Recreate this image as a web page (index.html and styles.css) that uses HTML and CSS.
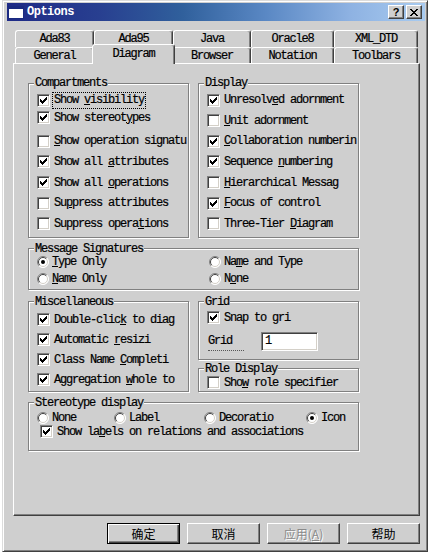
FILE: index.html
```html
<!DOCTYPE html>
<html>
<head>
<meta charset="utf-8">
<link rel="stylesheet" href="styles.css">
</head>
<body>
<div class="window">
  <div class="titlebar">
    <svg class="appicon" width="16" height="13" viewBox="0 0 16 13"><rect x="0.5" y="0.5" width="15" height="12" fill="#fff" stroke="#1a2a80"/><rect x="0" y="0" width="16" height="3" fill="#1a2a80"/></svg>
    <span class="title">Options</span>
    <div class="capbtns">
      <span class="cbtn q">?</span>
      <span class="cbtn"><svg width="8" height="7" viewBox="0 0 8 7"><path d="M0 0h2v1h-2zM6 0h2v1h-2zM1 1h2v1h-2zM5 1h2v1h-2zM2 2h4v1h-4zM3 3h2v1h-2zM2 4h4v1h-4zM1 5h2v1h-2zM5 5h2v1h-2zM0 6h2v1h-2zM6 6h2v1h-2z" fill="#000"/></svg></span>
    </div>
  </div>
  <div class="body">
    <div class="tabs">
      <div class="tabrow back">
        <div class="tab">Ada83</div>
        <div class="tab">Ada95</div>
        <div class="tab">Java</div>
        <div class="tab">Oracle8</div>
        <div class="tab">XML_DTD</div>
      </div>
      <div class="tabrow front">
        <div class="tab">General</div>
        <div class="tab sel">Diagram</div>
        <div class="tab">Browser</div>
        <div class="tab">Notation</div>
        <div class="tab">Toolbars</div>
      </div>
    </div>
    <div class="panel">
      <div class="pair">
        <fieldset class="grp half">
          <legend>Compartments</legend>
          <div class="rows seven">
            <div class="row"><span class="cb"><svg width="7" height="7" viewBox="0 0 7 7"><path d="M6 0h1v3h-1zM5 1h1v3h-1zM4 2h1v3h-1zM3 3h1v3h-1zM2 4h1v3h-1zM1 3h1v3h-1zM0 2h1v3h-1z"/></svg></span><span class="focus">Show <u>v</u>isibility</span></div>
            <div class="row up"><span class="cb"><svg width="7" height="7" viewBox="0 0 7 7"><path d="M6 0h1v3h-1zM5 1h1v3h-1zM4 2h1v3h-1zM3 3h1v3h-1zM2 4h1v3h-1zM1 3h1v3h-1zM0 2h1v3h-1z"/></svg></span><span>Show stereot<u>y</u>pes</span></div>
            <div class="row"><span class="cb"></span><span><u>S</u>how operation signatu</span></div>
            <div class="row"><span class="cb"><svg width="7" height="7" viewBox="0 0 7 7"><path d="M6 0h1v3h-1zM5 1h1v3h-1zM4 2h1v3h-1zM3 3h1v3h-1zM2 4h1v3h-1zM1 3h1v3h-1zM0 2h1v3h-1z"/></svg></span><span>Show all <u>a</u>ttributes</span></div>
            <div class="row"><span class="cb"><svg width="7" height="7" viewBox="0 0 7 7"><path d="M6 0h1v3h-1zM5 1h1v3h-1zM4 2h1v3h-1zM3 3h1v3h-1zM2 4h1v3h-1zM1 3h1v3h-1zM0 2h1v3h-1z"/></svg></span><span>Show all <u>o</u>perations</span></div>
            <div class="row"><span class="cb"></span><span>Su<u>p</u>press attributes</span></div>
            <div class="row"><span class="cb"></span><span>Suppress opera<u>t</u>ions</span></div>
          </div>
        </fieldset>
        <fieldset class="grp half">
          <legend>Display</legend>
          <div class="rows seven">
            <div class="row"><span class="cb"><svg width="7" height="7" viewBox="0 0 7 7"><path d="M6 0h1v3h-1zM5 1h1v3h-1zM4 2h1v3h-1zM3 3h1v3h-1zM2 4h1v3h-1zM1 3h1v3h-1zM0 2h1v3h-1z"/></svg></span><span>Unresolv<u>e</u>d adornment</span></div>
            <div class="row"><span class="cb"></span><span><u>U</u>nit adornment</span></div>
            <div class="row"><span class="cb"><svg width="7" height="7" viewBox="0 0 7 7"><path d="M6 0h1v3h-1zM5 1h1v3h-1zM4 2h1v3h-1zM3 3h1v3h-1zM2 4h1v3h-1zM1 3h1v3h-1zM0 2h1v3h-1z"/></svg></span><span><u>C</u>ollaboration numberin</span></div>
            <div class="row"><span class="cb"><svg width="7" height="7" viewBox="0 0 7 7"><path d="M6 0h1v3h-1zM5 1h1v3h-1zM4 2h1v3h-1zM3 3h1v3h-1zM2 4h1v3h-1zM1 3h1v3h-1zM0 2h1v3h-1z"/></svg></span><span>Sequence <u>n</u>umbering</span></div>
            <div class="row"><span class="cb"></span><span><u>H</u>ierarchical Messag</span></div>
            <div class="row"><span class="cb"><svg width="7" height="7" viewBox="0 0 7 7"><path d="M6 0h1v3h-1zM5 1h1v3h-1zM4 2h1v3h-1zM3 3h1v3h-1zM2 4h1v3h-1zM1 3h1v3h-1zM0 2h1v3h-1z"/></svg></span><span><u>F</u>ocus of control</span></div>
            <div class="row"><span class="cb"></span><span>Three-Tier <u>D</u>iagram</span></div>
          </div>
        </fieldset>
      </div>

      <fieldset class="grp wide msg">
        <legend>Message Signatures</legend>
        <div class="radiogrid">
          <div class="rrow"><svg class="rb" width="12" height="12" viewBox="0 0 12 12"><circle cx="6" cy="6" r="5.5" fill="#fff"/><path d="M2.1 9.9A5.5 5.5 0 0 1 9.9 2.1" stroke="#808080" fill="none"/><path d="M9.9 2.1A5.5 5.5 0 0 1 2.1 9.9" stroke="#fff" fill="none"/><path d="M2.8 9.2A4.5 4.5 0 0 1 9.2 2.8" stroke="#404040" fill="none"/><path d="M9.2 2.8A4.5 4.5 0 0 1 2.8 9.2" stroke="#d4d0c8" fill="none"/><circle cx="6" cy="6" r="2" fill="#000"/></svg><span><u>T</u>ype Only</span></div>
          <div class="rrow"><svg class="rb" width="12" height="12" viewBox="0 0 12 12"><circle cx="6" cy="6" r="5.5" fill="#fff"/><path d="M2.1 9.9A5.5 5.5 0 0 1 9.9 2.1" stroke="#808080" fill="none"/><path d="M9.9 2.1A5.5 5.5 0 0 1 2.1 9.9" stroke="#fff" fill="none"/><path d="M2.8 9.2A4.5 4.5 0 0 1 9.2 2.8" stroke="#404040" fill="none"/><path d="M9.2 2.8A4.5 4.5 0 0 1 2.8 9.2" stroke="#d4d0c8" fill="none"/></svg><span>Na<u>m</u>e and Type</span></div>
          <div class="rrow"><svg class="rb" width="12" height="12" viewBox="0 0 12 12"><circle cx="6" cy="6" r="5.5" fill="#fff"/><path d="M2.1 9.9A5.5 5.5 0 0 1 9.9 2.1" stroke="#808080" fill="none"/><path d="M9.9 2.1A5.5 5.5 0 0 1 2.1 9.9" stroke="#fff" fill="none"/><path d="M2.8 9.2A4.5 4.5 0 0 1 9.2 2.8" stroke="#404040" fill="none"/><path d="M9.2 2.8A4.5 4.5 0 0 1 2.8 9.2" stroke="#d4d0c8" fill="none"/></svg><span><u>N</u>ame Only</span></div>
          <div class="rrow"><svg class="rb" width="12" height="12" viewBox="0 0 12 12"><circle cx="6" cy="6" r="5.5" fill="#fff"/><path d="M2.1 9.9A5.5 5.5 0 0 1 9.9 2.1" stroke="#808080" fill="none"/><path d="M9.9 2.1A5.5 5.5 0 0 1 2.1 9.9" stroke="#fff" fill="none"/><path d="M2.8 9.2A4.5 4.5 0 0 1 9.2 2.8" stroke="#404040" fill="none"/><path d="M9.2 2.8A4.5 4.5 0 0 1 2.8 9.2" stroke="#d4d0c8" fill="none"/></svg><span>N<u>o</u>ne</span></div>
        </div>
      </fieldset>

      <div class="pair lower">
        <fieldset class="grp half misc">
          <legend>Miscellaneous</legend>
          <div class="rows four">
            <div class="row"><span class="cb"><svg width="7" height="7" viewBox="0 0 7 7"><path d="M6 0h1v3h-1zM5 1h1v3h-1zM4 2h1v3h-1zM3 3h1v3h-1zM2 4h1v3h-1zM1 3h1v3h-1zM0 2h1v3h-1z"/></svg></span><span>Double-clic<u>k</u> to diag</span></div>
            <div class="row"><span class="cb"><svg width="7" height="7" viewBox="0 0 7 7"><path d="M6 0h1v3h-1zM5 1h1v3h-1zM4 2h1v3h-1zM3 3h1v3h-1zM2 4h1v3h-1zM1 3h1v3h-1zM0 2h1v3h-1z"/></svg></span><span>Automatic <u>r</u>esizi</span></div>
            <div class="row"><span class="cb"><svg width="7" height="7" viewBox="0 0 7 7"><path d="M6 0h1v3h-1zM5 1h1v3h-1zM4 2h1v3h-1zM3 3h1v3h-1zM2 4h1v3h-1zM1 3h1v3h-1zM0 2h1v3h-1z"/></svg></span><span>Class Name <u>C</u>ompleti</span></div>
            <div class="row"><span class="cb"><svg width="7" height="7" viewBox="0 0 7 7"><path d="M6 0h1v3h-1zM5 1h1v3h-1zM4 2h1v3h-1zM3 3h1v3h-1zM2 4h1v3h-1zM1 3h1v3h-1zM0 2h1v3h-1z"/></svg></span><span>Aggregation <u>w</u>hole to</span></div>
          </div>
        </fieldset>
        <div class="col">
          <fieldset class="grp half grid">
            <legend>Grid</legend>
            <div class="row"><span class="cb"><svg width="7" height="7" viewBox="0 0 7 7"><path d="M6 0h1v3h-1zM5 1h1v3h-1zM4 2h1v3h-1zM3 3h1v3h-1zM2 4h1v3h-1zM1 3h1v3h-1zM0 2h1v3h-1z"/></svg></span><span>Snap to <u>g</u>ri</span></div>
            <div class="field">
              <span class="flabel">Grid</span>
              <span class="input">1</span>
            </div>
          </fieldset>
          <fieldset class="grp half role">
            <legend>Role Display</legend>
            <div class="row short"><span class="cb"></span><span>Sho<u>w</u> role specifier</span></div>
          </fieldset>
        </div>
      </div>

      <fieldset class="grp wide stereo">
        <legend>Stereotype display</legend>
        <div class="srow">
          <div class="rrow s1"><svg class="rb" width="12" height="12" viewBox="0 0 12 12"><circle cx="6" cy="6" r="5.5" fill="#fff"/><path d="M2.1 9.9A5.5 5.5 0 0 1 9.9 2.1" stroke="#808080" fill="none"/><path d="M9.9 2.1A5.5 5.5 0 0 1 2.1 9.9" stroke="#fff" fill="none"/><path d="M2.8 9.2A4.5 4.5 0 0 1 9.2 2.8" stroke="#404040" fill="none"/><path d="M9.2 2.8A4.5 4.5 0 0 1 2.8 9.2" stroke="#d4d0c8" fill="none"/></svg><span>None</span></div>
          <div class="rrow s2"><svg class="rb" width="12" height="12" viewBox="0 0 12 12"><circle cx="6" cy="6" r="5.5" fill="#fff"/><path d="M2.1 9.9A5.5 5.5 0 0 1 9.9 2.1" stroke="#808080" fill="none"/><path d="M9.9 2.1A5.5 5.5 0 0 1 2.1 9.9" stroke="#fff" fill="none"/><path d="M2.8 9.2A4.5 4.5 0 0 1 9.2 2.8" stroke="#404040" fill="none"/><path d="M9.2 2.8A4.5 4.5 0 0 1 2.8 9.2" stroke="#d4d0c8" fill="none"/></svg><span>Label</span></div>
          <div class="rrow s3"><svg class="rb" width="12" height="12" viewBox="0 0 12 12"><circle cx="6" cy="6" r="5.5" fill="#fff"/><path d="M2.1 9.9A5.5 5.5 0 0 1 9.9 2.1" stroke="#808080" fill="none"/><path d="M9.9 2.1A5.5 5.5 0 0 1 2.1 9.9" stroke="#fff" fill="none"/><path d="M2.8 9.2A4.5 4.5 0 0 1 9.2 2.8" stroke="#404040" fill="none"/><path d="M9.2 2.8A4.5 4.5 0 0 1 2.8 9.2" stroke="#d4d0c8" fill="none"/></svg><span>Decoratio</span></div>
          <div class="rrow"><svg class="rb" width="12" height="12" viewBox="0 0 12 12"><circle cx="6" cy="6" r="5.5" fill="#fff"/><path d="M2.1 9.9A5.5 5.5 0 0 1 9.9 2.1" stroke="#808080" fill="none"/><path d="M9.9 2.1A5.5 5.5 0 0 1 2.1 9.9" stroke="#fff" fill="none"/><path d="M2.8 9.2A4.5 4.5 0 0 1 9.2 2.8" stroke="#404040" fill="none"/><path d="M9.2 2.8A4.5 4.5 0 0 1 2.8 9.2" stroke="#d4d0c8" fill="none"/><circle cx="6" cy="6" r="2" fill="#000"/></svg><span>Icon</span></div>
        </div>
        <div class="row short indent"><span class="cb"><svg width="7" height="7" viewBox="0 0 7 7"><path d="M6 0h1v3h-1zM5 1h1v3h-1zM4 2h1v3h-1zM3 3h1v3h-1zM2 4h1v3h-1zM1 3h1v3h-1zM0 2h1v3h-1z"/></svg></span><span>Show la<u>b</u>els on relations and associations</span></div>
      </fieldset>
    </div>
    <div class="btns">
      <span class="btn def">确定</span>
      <span class="btn">取消</span>
      <span class="btn dis">应用(<u>A</u>)</span>
      <span class="btn">帮助</span>
    </div>
  </div>
</div>
</body>
</html>
```

FILE: styles.css
```css
:root {
  --face: #cfcfcf;
}

html, body {
  margin: 0;
  background: #ffffff;
}

body {
  font-family: "Liberation Mono", "DejaVu Sans Mono", monospace;
  font-size: 12px;
  letter-spacing: -1.2px;
  -webkit-text-stroke: 0.2px #000;
  color: #000;
}

.window {
  margin-left: 2px;
  width: 426px;
  box-sizing: border-box;
  background: var(--face);
  border: 1px solid;
  border-color: #dcdcdc #404040 #404040 #dcdcdc;
  box-shadow: inset 1px 1px #fff, inset -1px -1px #808080;
  padding: 2px 2px 7px 4px;
}

/* title bar */
.titlebar {
  height: 18px;
  display: flex;
  align-items: center;
  background: linear-gradient(90deg, #1e2a86 0%, #283f90 22%, #30609c 42%, #5a88c4 62%, #8eb2e2 82%, #a8cbf0 100%);
}

.appicon {
  margin-left: 1px;
  flex: none;
}

.title {
  margin-left: 3px;
  color: #fff;
  -webkit-text-stroke: 0;
  font-weight: bold;
  letter-spacing: -0.5px;
  font-size: 12px;
}

.capbtns {
  margin-left: auto;
  margin-right: 3px;
  display: flex;
  gap: 2px;
}

.cbtn {
  width: 16px;
  height: 14px;
  box-sizing: border-box;
  background: var(--face);
  border: 1px solid;
  border-color: #fff #404040 #404040 #fff;
  box-shadow: inset -1px -1px #808080;
  display: flex;
  align-items: center;
  justify-content: center;
}

.cbtn.q {
  font-family: "Liberation Sans", Arial, sans-serif;
  font-weight: bold;
  font-size: 11px;
  letter-spacing: 0;
  line-height: 12px;
  -webkit-text-stroke: 0;
}

/* body */
.body {
  padding: 9px 5px 0 6px;
}

.tabs {
  display: flex;
  flex-direction: column;
}

.tabrow {
  display: grid;
  grid-template-columns: 79px 79px 78px 83px 84px;
  margin-left: 2px;
}

.tabrow.back {
  grid-template-rows: 17px;
}

.tabrow.front {
  grid-template-rows: 16px;
}

.tab {
  box-sizing: border-box;
  background: var(--face);
  border-top: 1px solid #fff;
  border-left: 1px solid #fff;
  border-right: 1px solid #404040;
  box-shadow: inset -1px 0 #808080;
  border-radius: 3px 3px 0 0;
  display: flex;
  align-items: center;
  justify-content: center;
  white-space: nowrap;
}

.tab.sel {
  align-self: start;
  height: 20px;
  margin: -3px -2px -1px -2px;
  position: relative;
  z-index: 1;
  padding-bottom: 1px;
}

.panel {
  height: 453px;
  box-sizing: border-box;
  border: 1px solid;
  border-color: #fff #404040 #404040 #fff;
  box-shadow: inset -1px -1px #808080;
  padding: 13px 0 0 14px;
  display: flex;
  flex-direction: column;
  align-items: flex-start;
}

.pair {
  display: flex;
  gap: 9px;
  align-items: stretch;
}

/* group boxes */
.grp {
  margin: 0;
  padding: 2px 8px 4px 8px;
  border: 1px solid #808080;
  box-shadow: inset 1px 1px #fff, 1px 1px #fff;
  min-width: 0;
  box-sizing: border-box;
}

.grp legend {
  padding: 0 1px;
  margin-left: -3px;
  line-height: 12px;
  background: var(--face);
  white-space: nowrap;
}

.half {
  width: 161px;
}

.wide {
  width: 331px;
}

.rows {
  display: flex;
  flex-direction: column;
}

.rows.seven {
  gap: 2.67px;
}

.rows.four {
  gap: 2px;
}

.row {
  display: flex;
  align-items: center;
  gap: 4px;
  height: 18px;
  white-space: nowrap;
}

.row.short {
  height: 14px;
}

.row.up {
  margin-top: -3px;
  margin-bottom: 3px;
}

.cb {
  flex: none;
  width: 13px;
  height: 13px;
  box-sizing: border-box;
  background: #fff;
  border: 1px solid;
  border-color: #808080 #fff #fff #808080;
  box-shadow: inset 1px 1px #404040, inset -1px -1px #d4d0c8;
  display: flex;
  align-items: center;
  justify-content: center;
}

.cb svg {
  display: block;
  fill: #000;
}

.focus {
  outline: 1px dotted #000;
  padding: 0 1px;
  margin-left: -1px;
  line-height: 15px;
}

/* radio */
.radiogrid {
  display: grid;
  grid-template-columns: 172px 1fr;
  row-gap: 3px;
}

.msg {
  margin-top: 5px;
  padding-top: 0;
  padding-bottom: 3px;
}

.rrow {
  display: flex;
  align-items: center;
  gap: 3px;
  height: 14px;
  white-space: nowrap;
}

.rb {
  flex: none;
  display: block;
}

/* lower section */
.lower {
  margin-top: 6px;
  align-items: flex-start;
}

.misc {
  padding-top: 3px;
  padding-bottom: 2px;
}

.col {
  display: flex;
  flex-direction: column;
  gap: 3px;
}

.grid {
  padding-top: 1px;
  padding-bottom: 8px;
}

.field {
  display: flex;
  align-items: flex-start;
  margin-top: 5px;
  margin-left: 1px;
}

.flabel {
  width: 36px;
  height: 16px;
  margin-top: 3px;
  margin-right: 17px;
  line-height: 13px;
  border-bottom: 1px dotted #555;
  box-sizing: border-box;
}

.input {
  width: 57px;
  height: 19px;
  box-sizing: border-box;
  background: #fff;
  border: 1px solid;
  border-color: #808080 #fff #fff #808080;
  box-shadow: inset 1px 1px #404040, inset -1px -1px #d4d0c8;
  padding: 0 3px;
  line-height: 17px;
}

.role {
  padding-top: 1px;
  padding-bottom: 1px;
}

.stereo {
  margin-top: 5px;
  padding-top: 2px;
  padding-bottom: 11px;
}

.srow {
  display: flex;
}

.s1 { width: 77px; }
.s2 { width: 90px; }
.s3 { width: 102px; }

.indent {
  margin-left: 3px;
}

/* buttons */
.btns {
  display: flex;
  justify-content: flex-end;
  gap: 7px;
  margin-top: 7px;
}

.btn {
  width: 73px;
  height: 21px;
  box-sizing: border-box;
  border: 1px solid;
  border-color: #fff #404040 #404040 #fff;
  box-shadow: inset -1px -1px #808080;
  display: flex;
  align-items: center;
  justify-content: center;
  font-family: "Noto Sans CJK SC", "Liberation Sans", sans-serif;
  font-size: 12px;
  letter-spacing: 0;
  -webkit-text-stroke: 0;
}

.btn.def {
  border-color: #000;
  box-shadow: inset 1px 1px #fff, inset -1px -1px #404040, inset -2px -2px #808080;
}

.btn.dis {
  color: #8a8a8a;
  text-shadow: 1px 1px #fff;
}
```
